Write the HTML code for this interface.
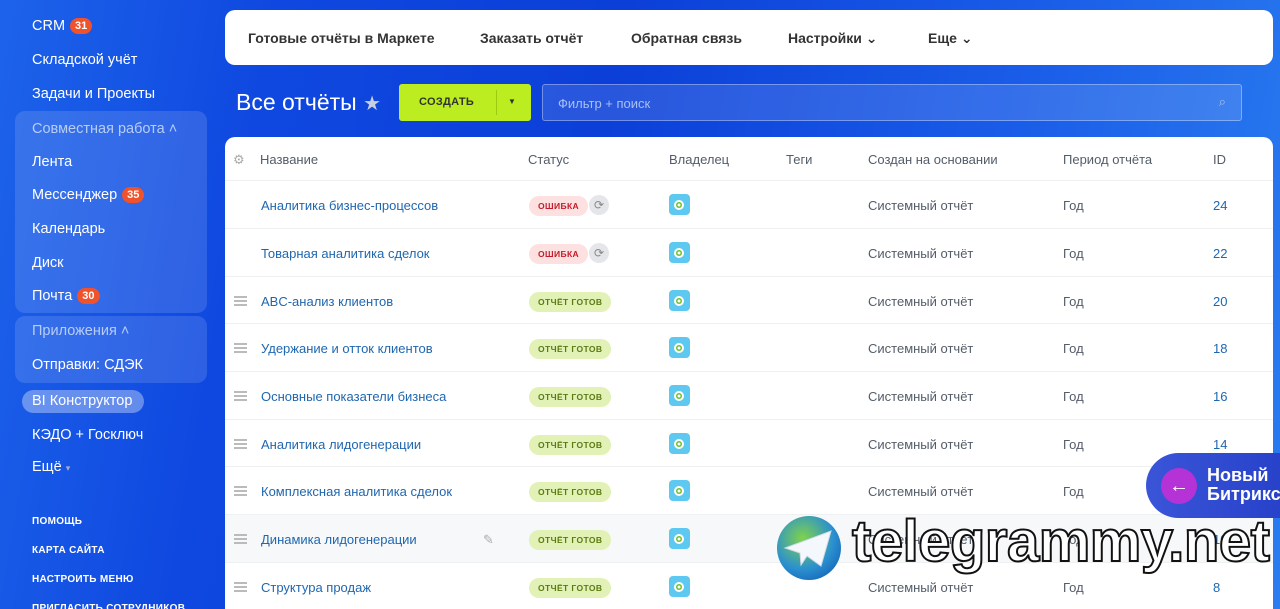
<!DOCTYPE html>
<html><head><meta charset="utf-8"><style>
*{box-sizing:border-box;margin:0;padding:0}
html,body{width:1280px;height:609px;overflow:hidden}
body{font-family:"Liberation Sans","DejaVu Sans",sans-serif;background:linear-gradient(100deg,#1d63ea 0%,#0f48e0 20%,#0b3fd8 45%,#1a5de8 75%,#2a7cf0 100%);position:relative}
.sb{position:absolute;left:0;top:0;width:215px;color:#fff;font-size:14.5px}
.it{position:absolute;left:32px;white-space:nowrap}
.bd{display:inline-block;background:#f0522b;border-radius:9px;font-size:11px;font-weight:bold;padding:2px 5px;margin-left:5px;vertical-align:1px}
.grp{position:absolute;left:15px;width:192px;background:rgba(255,255,255,.13);border-radius:10px}
.sm{position:absolute;left:32px;font-size:10px;font-weight:bold;letter-spacing:.3px}
.top{position:absolute;left:225px;top:10px;width:1048px;height:55px;background:#fff;border-radius:10px;font-size:14px;color:#333;font-weight:bold}
.top span{position:absolute;top:20px}
.tbl{position:absolute;left:225px;top:137px;width:1048px;height:480px;background:#fff;border-radius:10px 10px 0 0;font-size:13px;color:#535c69}
.row{position:absolute;left:0;width:1048px;height:48px;border-top:1px solid #eef0f2}
.row div{position:absolute;top:17px;white-space:nowrap}
.nm{left:36px;color:#2067b0}
.ham{left:9px;width:13px;height:10px;top:19px!important;background:linear-gradient(#bbb 0 2px,transparent 2px 4px,#bbb 4px 6px,transparent 6px 8px,#bbb 8px 10px)}
.st{left:304px;top:15px!important;font-size:8.5px;font-weight:bold;padding:5px 9px;border-radius:10px;letter-spacing:.4px}
.err{background:#fde0e0;color:#c21b2b}
.ok{background:#e2f1b6;color:#5b7a12}
.rf{left:364px;top:14px!important;width:20px;height:20px;border-radius:50%;background:#e4e6e9;color:#888;font-size:12px;text-align:center;line-height:20px}
.ow{left:444px;top:13px!important;width:21px;height:21px;background:#5dc9f0;border-radius:4px}
.ow:after{content:"";position:absolute;left:7px;top:8px;width:6px;height:6px;background:#fff;border-radius:50%;box-shadow:0 0 0 2px #fff,inset 0 0 0 1.5px #6cbf2b}
.sy{left:643px}.pr{left:838px}.id{left:988px;color:#2067b0}
</style></head><body>
<div class="sb">
<div class="it" style="top:18px">CRM<span class="bd">31</span></div>
<div class="it" style="top:52px">Складской учёт</div>
<div class="it" style="top:86px">Задачи и Проекты</div>
<div class="grp" style="top:111px;height:202px"></div>
<div class="it" style="top:121px;color:#b8cdf6">Совместная работа ˄</div>
<div class="it" style="top:154px">Лента</div>
<div class="it" style="top:187px">Мессенджер<span class="bd">35</span></div>
<div class="it" style="top:221px">Календарь</div>
<div class="it" style="top:255px">Диск</div>
<div class="it" style="top:288px">Почта<span class="bd">30</span></div>
<div class="grp" style="top:316px;height:67px"></div>
<div class="it" style="top:323px;color:#b8cdf6">Приложения ˄</div>
<div class="it" style="top:357px">Отправки: СДЭК</div>
<div style="position:absolute;left:22px;top:390px;width:122px;height:23px;border-radius:12px;background:rgba(255,255,255,.35)"></div>
<div class="it" style="top:393px">BI Конструктор</div>
<div class="it" style="top:427px">КЭДО + Госключ</div>
<div class="it" style="top:459px">Ещё <span style="font-size:9px;color:#aac">▾</span></div>
<div class="sm" style="top:516px">ПОМОЩЬ</div>
<div class="sm" style="top:545px">КАРТА САЙТА</div>
<div class="sm" style="top:574px">НАСТРОИТЬ МЕНЮ</div>
<div class="sm" style="top:603px">ПРИГЛАСИТЬ СОТРУДНИКОВ</div>
</div>
<div class="top"><span style="left:23px">Готовые отчёты в Маркете</span><span style="left:255px">Заказать отчёт</span><span style="left:406px">Обратная связь</span><span style="left:563px">Настройки ⌄</span><span style="left:703px">Еще ⌄</span></div>
<div style="position:absolute;left:236px;top:89px;color:#fff;font-size:23px">Все отчёты <span style="color:#c8cfe0;font-size:20px">★</span></div>
<div style="position:absolute;left:399px;top:84px;width:132px;height:37px;background:#bbed21;border-radius:3px;font-size:11px;font-weight:bold;color:#333;letter-spacing:.3px"><span style="position:absolute;left:20px;top:12px">СОЗДАТЬ</span><span style="position:absolute;left:97px;top:6px;width:1px;height:25px;background:#9ccb10"></span><span style="position:absolute;left:109px;top:13px;font-size:8px">▼</span></div>
<div style="position:absolute;left:542px;top:84px;width:700px;height:37px;border:1px solid rgba(255,255,255,.35);background:rgba(255,255,255,.12);border-radius:3px;color:#a9c0f2;font-size:13px;padding:11px 15px">Фильтр + поиск<span style="position:absolute;right:15px;top:9px">⌕</span></div>
<div class="tbl">
<div style="position:absolute;top:15px;left:8px;color:#aaa">⚙</div>
<div style="position:absolute;top:15px;left:35px">Название</div>
<div style="position:absolute;top:15px;left:303px">Статус</div>
<div style="position:absolute;top:15px;left:444px">Владелец</div>
<div style="position:absolute;top:15px;left:561px">Теги</div>
<div style="position:absolute;top:15px;left:643px">Создан на основании</div>
<div style="position:absolute;top:15px;left:838px">Период отчёта</div>
<div style="position:absolute;top:15px;left:988px">ID</div>
<div class="row" style="top:43px"><div class="nm" style="top:17px">Аналитика бизнес-процессов</div><div class="st err">ОШИБКА</div><div class="rf">⟳</div><div class="ow"></div><div class="sy">Системный отчёт</div><div class="pr">Год</div><div class="id">24</div></div>
<div class="row" style="top:91px"><div class="nm" style="top:17px">Товарная аналитика сделок</div><div class="st err">ОШИБКА</div><div class="rf">⟳</div><div class="ow"></div><div class="sy">Системный отчёт</div><div class="pr">Год</div><div class="id">22</div></div>
<div class="row" style="top:139px"><div class="ham"></div><div class="nm" style="top:17px">ABC-анализ клиентов</div><div class="st ok">ОТЧЁТ ГОТОВ</div><div class="ow"></div><div class="sy">Системный отчёт</div><div class="pr">Год</div><div class="id">20</div></div>
<div class="row" style="top:186px"><div class="ham"></div><div class="nm" style="top:17px">Удержание и отток клиентов</div><div class="st ok">ОТЧЁТ ГОТОВ</div><div class="ow"></div><div class="sy">Системный отчёт</div><div class="pr">Год</div><div class="id">18</div></div>
<div class="row" style="top:234px"><div class="ham"></div><div class="nm" style="top:17px">Основные показатели бизнеса</div><div class="st ok">ОТЧЁТ ГОТОВ</div><div class="ow"></div><div class="sy">Системный отчёт</div><div class="pr">Год</div><div class="id">16</div></div>
<div class="row" style="top:282px"><div class="ham"></div><div class="nm" style="top:17px">Аналитика лидогенерации</div><div class="st ok">ОТЧЁТ ГОТОВ</div><div class="ow"></div><div class="sy">Системный отчёт</div><div class="pr">Год</div><div class="id">14</div></div>
<div class="row" style="top:329px"><div class="ham"></div><div class="nm" style="top:17px">Комплексная аналитика сделок</div><div class="st ok">ОТЧЁТ ГОТОВ</div><div class="ow"></div><div class="sy">Системный отчёт</div><div class="pr">Год</div><div class="id">12</div></div>
<div class="row" style="top:377px;background:#f7f8f9"><div class="ham"></div><div class="nm" style="top:17px">Динамика лидогенерации</div><div style="left:258px;color:#aaa">✎</div><div class="st ok">ОТЧЁТ ГОТОВ</div><div class="ow"></div><div class="sy">Системный отчёт</div><div class="pr">Год</div><div class="id">10</div></div>
<div class="row" style="top:425px"><div class="ham"></div><div class="nm" style="top:17px">Структура продаж</div><div class="st ok">ОТЧЁТ ГОТОВ</div><div class="ow"></div><div class="sy">Системный отчёт</div><div class="pr">Год</div><div class="id">8</div></div>
</div>
<div style="position:absolute;left:1146px;top:453px;width:150px;height:65px;border-radius:33px 0 0 33px;background:linear-gradient(90deg,#3a55d8,#2540c8);color:#fff;font-weight:bold;font-size:18px;line-height:19px"><div style="position:absolute;left:15px;top:15px;width:36px;height:36px;border-radius:50%;background:#b533d6;text-align:center;line-height:36px;font-size:20px">←</div><div style="position:absolute;left:61px;top:13px">Новый<br>Битрикс</div></div>
<div style="position:absolute;left:777px;top:516px;width:64px;height:64px;border-radius:50%;background:radial-gradient(circle at 40% 35%,#7fd34a,#2a8fd0 55%,#0a4fa8);"></div>
<svg style="position:absolute;left:783px;top:528px" width="52" height="42"><path d="M2 20 L48 3 L38 38 L24 28 L18 37 L17 25 Z" fill="#f4f8fc" stroke="#cfdbe8"/></svg>
<div style="position:absolute;left:852px;top:510px;font-size:58px;font-weight:bold;color:#fff;-webkit-text-stroke:2px #111;letter-spacing:-0.5px;line-height:64px">telegrammy.net</div>
</body></html>
